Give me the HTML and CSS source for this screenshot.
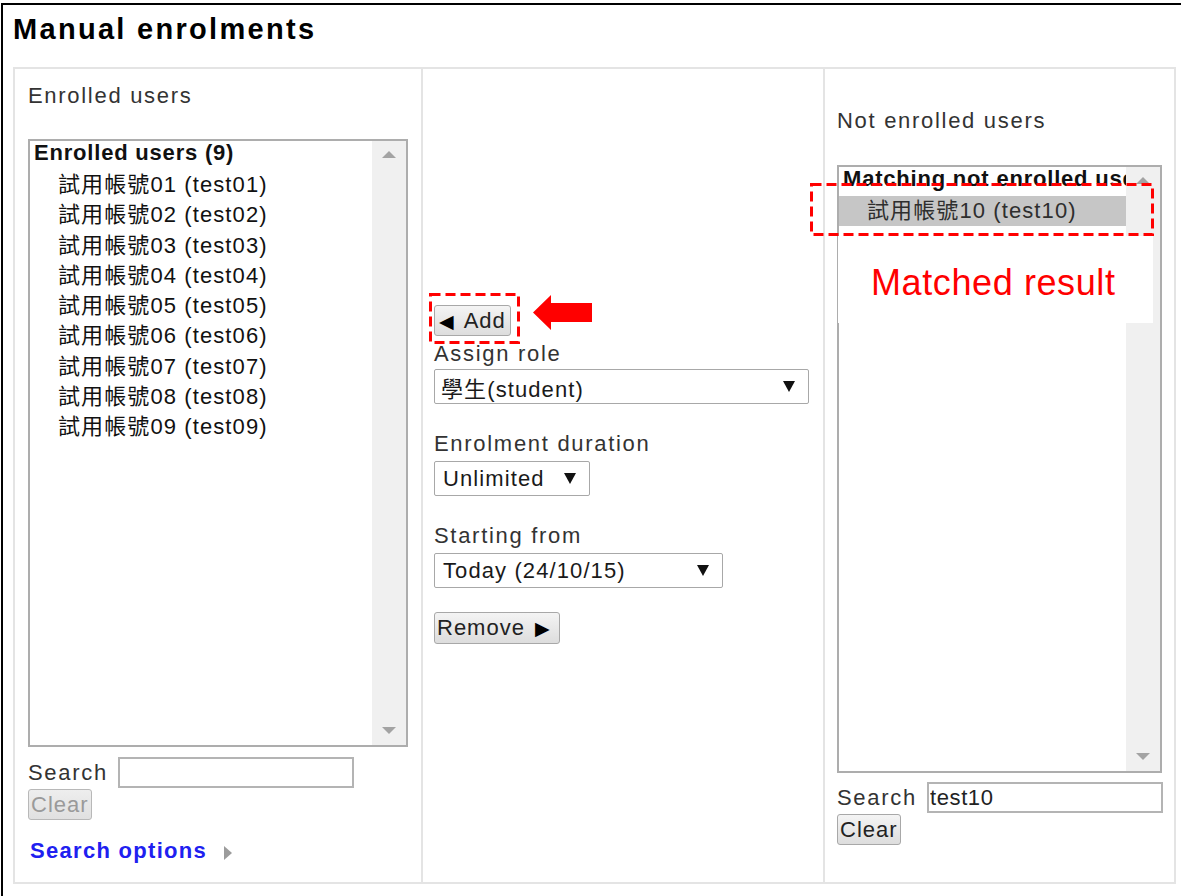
FILE: index.html
```html
<!DOCTYPE html>
<html lang="en">
<head>
<meta charset="utf-8">
<title>Manual enrolments</title>
<link rel="stylesheet" href="styles.css">
</head>
<body>
<div class="frame">
  <h2 class="page-title">Manual enrolments</h2>
  <div class="enrol-table">
    <!-- Users already enrolled in the course -->
    <section class="col col-existing">
      <label class="field-label list-label">Enrolled users</label>
      <div class="listbox">
        <div class="listbox-options">
          <div class="optgroup">Enrolled users (9)</div>
          <div class="option">試用帳號01 (test01)</div>
          <div class="option">試用帳號02 (test02)</div>
          <div class="option">試用帳號03 (test03)</div>
          <div class="option">試用帳號04 (test04)</div>
          <div class="option">試用帳號05 (test05)</div>
          <div class="option">試用帳號06 (test06)</div>
          <div class="option">試用帳號07 (test07)</div>
          <div class="option">試用帳號08 (test08)</div>
          <div class="option">試用帳號09 (test09)</div>
        </div>
        <div class="scrolltrack"><span class="scroll-arrow up"></span><span class="scroll-arrow down"></span></div>
      </div>
      <div class="search-row">
        <label class="search-label">Search</label>
        <input class="search-input" type="text" value="">
      </div>
      <button class="btn btn-clear" disabled>Clear</button>
      <a class="search-options" href="#">Search options<span class="collapsed-caret"></span></a>
    </section>

    <!-- Add / remove controls and enrolment settings -->
    <section class="col col-controls">
      <button class="btn btn-add"><span class="btn-glyph glyph-left">◀</span>Add</button>
      <div class="field field-role">
        <label class="field-label">Assign role</label>
        <div class="select select-role"><span>學生(student)</span><span class="select-caret"></span></div>
      </div>
      <div class="field">
        <label class="field-label">Enrolment duration</label>
        <div class="select select-duration"><span>Unlimited</span><span class="select-caret"></span></div>
      </div>
      <div class="field">
        <label class="field-label">Starting from</label>
        <div class="select select-start"><span>Today (24/10/15)</span><span class="select-caret"></span></div>
      </div>
      <button class="btn btn-remove">Remove<span class="btn-glyph glyph-right">▶</span></button>

      <svg class="note-box note-add" width="91" height="51" viewBox="0 0 91 51">
        <rect x="1.5" y="1.5" width="88" height="48" />
      </svg>
      <svg class="note-arrow" width="60" height="36" viewBox="0 0 60 36">
        <polygon points="0,17.5 18,0 18,8 59,8 59,27 18,27 18,35" />
      </svg>
    </section>

    <!-- Users that can be enrolled -->
    <section class="col col-potential">
      <label class="field-label list-label">Not enrolled users</label>
      <div class="listbox">
        <div class="listbox-options">
          <div class="optgroup">Matching not enrolled users (1)</div>
          <div class="option selected">試用帳號10 (test10)</div>
        </div>
        <div class="scrolltrack"><span class="scroll-arrow up"></span><span class="scroll-arrow down"></span></div>
      </div>
      <div class="search-row">
        <label class="search-label">Search</label>
        <input class="search-input" type="text" value="test10">
      </div>
      <button class="btn btn-clear">Clear</button>

      <svg class="note-box note-match" width="344" height="53" viewBox="0 0 344 53">
        <rect x="1.5" y="1.5" width="341" height="50" />
      </svg>
      <div class="note-cover">Matched result</div>
    </section>
  </div>
</div>
</body>
</html>
```
FILE: styles.css
```css
html, body {
  margin: 0;
  background: #fff;
}

body {
  font-family: "Liberation Sans", Arial, "Noto Sans CJK TC", sans-serif;
  font-size: 22px;
  color: #333;
  overflow: hidden;
}

.frame {
  margin: 3px 0 0 1px;
  border-top: 2px solid #000;
  border-left: 2px solid #000;
  padding: 7px 0 0 10px;
  height: 893px;
  box-sizing: border-box;
}

.page-title {
  margin: 0 0 21px;
  font-size: 29px;
  line-height: 34px;
  font-weight: bold;
  letter-spacing: 2.3px;
  color: #000;
}

/* three-column enrolment table */
.enrol-table {
  display: flex;
  width: 1163px;
  height: 817px;
  box-sizing: border-box;
  border: 2px solid #e4e4e4;
}

.col {
  position: relative;
  box-sizing: border-box;
  border-right: 2px solid #e4e4e4;
  display: flex;
  flex-direction: column;
  align-items: flex-start;
}

.col-existing {
  width: 408px;
  padding: 14px 0 0 13px;
}

.col-controls {
  width: 402px;
  padding: 236px 0 0 11px;
}

.col-potential {
  flex: 1;
  border-right: none;
  padding: 39px 0 0 12px;
}

.field-label {
  display: block;
  line-height: 25px;
  letter-spacing: 1.7px;
  color: #333;
}

.col-potential .list-label {
  margin-bottom: 32px;
}

.col-existing .list-label {
  margin-bottom: 31px;
}

/* list boxes */
.listbox {
  display: flex;
  width: 380px;
  height: 608px;
  box-sizing: border-box;
  border: 2px solid #adadad;
  background: #fff;
}

.col-potential .listbox {
  width: 325px;
}

.listbox-options {
  flex: 1;
  min-width: 0;
  overflow: hidden;
  white-space: nowrap;
  letter-spacing: 1.1px;
  color: #111;
}

.optgroup {
  padding-left: 4px;
  font-weight: bold;
  line-height: 24px;
  letter-spacing: 0.8px;
  margin-bottom: 5px;
}

.option {
  padding-left: 28px;
  line-height: 30.25px;
}

.option.selected {
  background: #c6c6c6;
  color: #2e2e2e;
  line-height: 30px;
}

.scrolltrack {
  width: 34px;
  flex: none;
  background: #f0f0f0;
  display: flex;
  flex-direction: column;
  align-items: center;
  justify-content: space-between;
  padding: 10px 0 11px;
  box-sizing: border-box;
}

.scroll-arrow {
  width: 0;
  height: 0;
  border-left: 7px solid transparent;
  border-right: 7px solid transparent;
}

.scroll-arrow.up {
  border-bottom: 7px solid #a3a3a3;
}

.scroll-arrow.down {
  border-top: 7px solid #a3a3a3;
}

/* search rows */
.search-row {
  display: flex;
  align-items: center;
  margin-top: 10px;
}

.col-potential .search-row {
  margin-top: 9px;
}

.search-label {
  width: 90px;
  letter-spacing: 1.7px;
  color: #333;
}

.search-input {
  width: 236px;
  height: 31px;
  box-sizing: border-box;
  border: 2px solid #b4b4b4;
  padding: 0 1px;
  font: inherit;
  letter-spacing: 0.6px;
  color: #222;
  outline: none;
}

/* buttons */
.btn {
  font: inherit;
  height: 31px;
  box-sizing: border-box;
  padding: 0 2px;
  border: 1px solid #a8a8a8;
  border-radius: 3px;
  background: linear-gradient(#f4f4f4, #dddddd);
  color: #222;
  letter-spacing: 1px;
  line-height: 27px;
}

.btn:disabled {
  color: #9a9a9a;
  border-color: #b8b8b8;
  background: linear-gradient(#eeeeee, #e0e0e0);
}

.btn-clear {
  margin-top: 1px;
}

.btn-add {
  width: 77px;
  padding: 0 2px 0 4px;
  text-align: left;
}

.btn-remove {
  width: 126px;
  height: 32px;
  margin-top: 24px;
  padding: 0 2px;
  text-align: left;
}

.btn-glyph {
  font-family: "DejaVu Sans", sans-serif;
  font-size: 19px;
  color: #000;
}

.glyph-left {
  margin-right: 9px;
}

.glyph-right {
  margin-left: 10px;
}

.search-options {
  display: flex;
  align-items: center;
  margin-top: 18px;
  margin-left: 2px;
  font-weight: bold;
  letter-spacing: 1.3px;
  line-height: 25px;
  color: #2020f0;
  text-decoration: none;
}

.collapsed-caret {
  width: 0;
  height: 0;
  margin-left: 17px;
  margin-top: 4px;
  border-left: 8px solid #9c9c9c;
  border-top: 7px solid transparent;
  border-bottom: 7px solid transparent;
}

/* enrolment settings */
.field {
  margin-top: 27px;
}

.field-role {
  margin-top: 5px;
}

.select {
  display: flex;
  align-items: center;
  justify-content: space-between;
  height: 35px;
  margin-top: 5px;
  box-sizing: border-box;
  border: 1px solid #a8a8a8;
  border-radius: 2px;
  padding: 0 13px 0 8px;
  background: #fff;
  color: #1a1a1a;
  letter-spacing: 1.1px;
}

.field-role .select {
  margin-top: 3px;
  padding-left: 6px;
}

.select-role { width: 375px; }
.select-duration { width: 156px; }
.select-start { width: 289px; }

.select-caret {
  width: 0;
  height: 0;
  border-left: 6px solid transparent;
  border-right: 6px solid transparent;
  border-top: 11px solid #111;
}

/* red annotation marks drawn over the form */
.note-box {
  position: absolute;
  fill: none;
  stroke: #ff0000;
  stroke-width: 3;
  stroke-dasharray: 10 5;
}

.note-add {
  left: 6px;
  top: 224px;
}

.note-arrow {
  position: absolute;
  left: 110px;
  top: 226px;
  fill: #ff0000;
}

.note-match {
  left: -15px;
  top: 114px;
}

.note-cover {
  position: absolute;
  left: 13px;
  top: 167px;
  width: 315px;
  height: 87px;
  box-sizing: border-box;
  padding: 29px 0 0 33px;
  background: #fff;
  color: #ff0000;
  font-size: 36px;
  line-height: 36px;
  letter-spacing: 0.6px;
}
```
